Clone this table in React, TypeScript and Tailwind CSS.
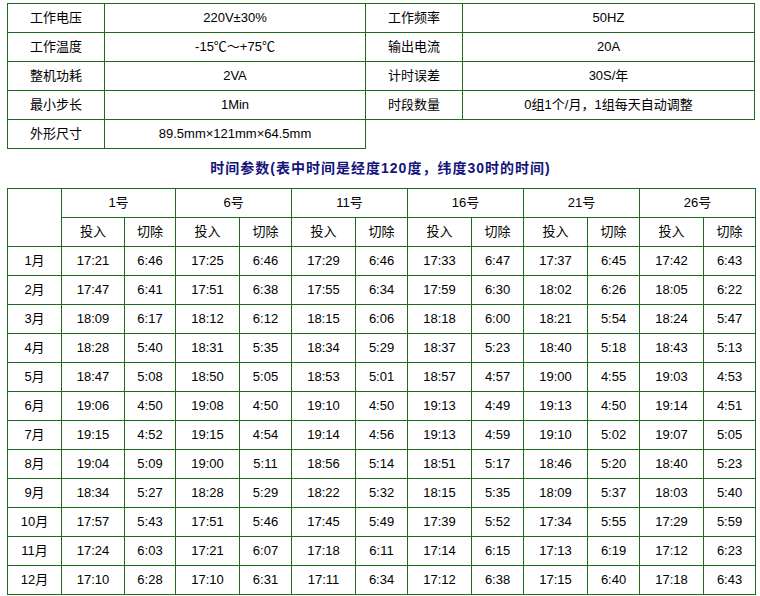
import { Fragment } from 'react';

const specs: [string, string, string, string][] = [
  ['工作电压', '220V±30%', '工作频率', '50HZ'],
  ['工作温度', '-15℃～+75℃', '输出电流', '20A'],
  ['整机功耗', '2VA', '计时误差', '30S/年'],
  ['最小步长', '1Min', '时段数量', '0组1个/月，1组每天自动调整'],
];

const days = ['1号', '6号', '11号', '16号', '21号', '26号'];

const rows: [string, string[]][] = [
  ['1月', ['17:21', '6:46', '17:25', '6:46', '17:29', '6:46', '17:33', '6:47', '17:37', '6:45', '17:42', '6:43']],
  ['2月', ['17:47', '6:41', '17:51', '6:38', '17:55', '6:34', '17:59', '6:30', '18:02', '6:26', '18:05', '6:22']],
  ['3月', ['18:09', '6:17', '18:12', '6:12', '18:15', '6:06', '18:18', '6:00', '18:21', '5:54', '18:24', '5:47']],
  ['4月', ['18:28', '5:40', '18:31', '5:35', '18:34', '5:29', '18:37', '5:23', '18:40', '5:18', '18:43', '5:13']],
  ['5月', ['18:47', '5:08', '18:50', '5:05', '18:53', '5:01', '18:57', '4:57', '19:00', '4:55', '19:03', '4:53']],
  ['6月', ['19:06', '4:50', '19:08', '4:50', '19:10', '4:50', '19:13', '4:49', '19:13', '4:50', '19:14', '4:51']],
  ['7月', ['19:15', '4:52', '19:15', '4:54', '19:14', '4:56', '19:13', '4:59', '19:10', '5:02', '19:07', '5:05']],
  ['8月', ['19:04', '5:09', '19:00', '5:11', '18:56', '5:14', '18:51', '5:17', '18:46', '5:20', '18:40', '5:23']],
  ['9月', ['18:34', '5:27', '18:28', '5:29', '18:22', '5:32', '18:15', '5:35', '18:09', '5:37', '18:03', '5:40']],
  ['10月', ['17:57', '5:43', '17:51', '5:46', '17:45', '5:49', '17:39', '5:52', '17:34', '5:55', '17:29', '5:59']],
  ['11月', ['17:24', '6:03', '17:21', '6:07', '17:18', '6:11', '17:14', '6:15', '17:13', '6:19', '17:12', '6:23']],
  ['12月', ['17:10', '6:28', '17:10', '6:31', '17:11', '6:34', '17:12', '6:38', '17:15', '6:40', '17:18', '6:43']],
];

const cell = 'border border-[#1d6b1d] h-[29px] p-0 text-center align-middle';

export default function App() {
  return (
    <div
      className="w-[760px] h-[596px] bg-white text-black text-[13px] pt-[3px] pl-[7px] overflow-hidden"
      style={{ fontFamily: '"Liberation Sans", "Noto Sans CJK SC", sans-serif' }}
    >
      <table className="table-fixed border-collapse w-[747px]">
        <colgroup>
          <col className="w-[97px]" />
          <col className="w-[261px]" />
          <col className="w-[97px]" />
          <col className="w-[292px]" />
        </colgroup>
        <tbody>
          {specs.map((r) => (
            <tr key={r[0]}>
              {r.map((t, i) => (
                <td key={i} className={cell}>{t}</td>
              ))}
            </tr>
          ))}
          <tr>
            <td className={cell}>外形尺寸</td>
            <td className={cell}>89.5mm×121mm×64.5mm</td>
            <td />
            <td />
          </tr>
        </tbody>
      </table>

      <div className="h-[39px] w-[747px] flex items-center justify-center font-bold text-[14px] tracking-[1px] text-[#14147a]">
        时间参数(表中时间是经度120度，纬度30时的时间)
      </div>

      <table className="table-fixed border-collapse w-[748px]">
        <colgroup>
          <col className="w-[54px]" />
          <col className="w-[63px]" />
          <col className="w-[51px]" />
          {[0, 1, 2, 3, 4].map((i) => (
            <Fragment key={i}>
              <col className="w-[64px]" />
              <col className="w-[52px]" />
            </Fragment>
          ))}
        </colgroup>
        <thead>
          <tr>
            <td rowSpan={2} className={cell} />
            {days.map((d) => (
              <td key={d} colSpan={2} className={cell}>{d}</td>
            ))}
          </tr>
          <tr>
            {days.map((d) => (
              <Fragment key={d}>
                <td className={cell}>投入</td>
                <td className={cell}>切除</td>
              </Fragment>
            ))}
          </tr>
        </thead>
        <tbody>
          {rows.map(([m, vals]) => (
            <tr key={m}>
              <td className={cell}>{m}</td>
              {vals.map((v, i) => (
                <td key={i} className={cell}>{v}</td>
              ))}
            </tr>
          ))}
        </tbody>
      </table>
    </div>
  );
}
